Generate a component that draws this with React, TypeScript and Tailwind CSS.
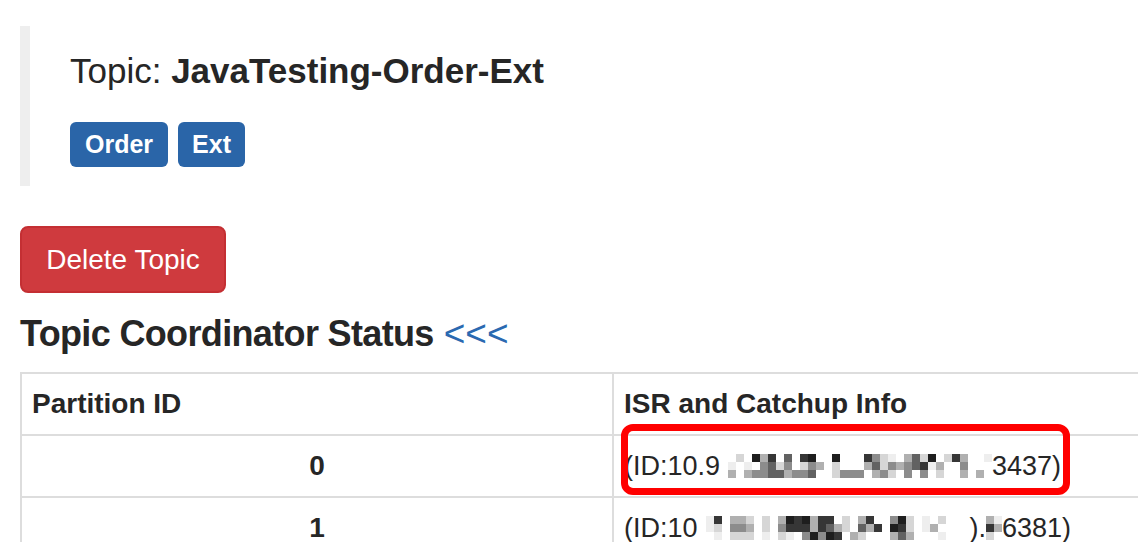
import React from "react";

const SHADES: Record<string, string> = {
  "0": "#ffffff",
  "1": "#eeeeee",
  "2": "#d6d6d6",
  "3": "#b0b0b0",
  "4": "#8c8c8c",
  "5": "#626262",
  "6": "#363636",
  "7": "#1e1e1e",
};

function Mosaic({ rows }: { rows: string[] }) {
  const cell = 8;
  const cols = rows[0].length;
  return (
    <svg
      width={cols * cell}
      height={rows.length * cell}
      viewBox={`0 0 ${cols * cell} ${rows.length * cell}`}
      className="shrink-0"
    >
      {rows.map((r, y) =>
        r.split("").map((c, x) =>
          c === "0" ? null : (
            <rect key={`${x}-${y}`} x={x * cell} y={y * cell} width={cell} height={cell} fill={SHADES[c]} />
          )
        )
      )}
    </svg>
  );
}

const mosaicA = [
  "0020736050670070006421035270263001",
  "0101045240243020003524345613004000",
  "0303445534450024440342040402003030",
];

const mosaicB = [
  "0160332020376736602036004720102000",
  "0120443020466636532053607620130000",
  "0010222010210474760320003530001000",
];

const mosaicC = ["31", "63", "20"];

export default function App() {
  return (
    <div
      className="w-[1138px] h-[542px] overflow-hidden bg-white text-[#262626] pl-[20px] pt-[26px]"
      style={{ fontFamily: '"Liberation Sans", Arial, Helvetica, sans-serif' }}
    >
      {/* Blockquote */}
      <div className="border-l-[10px] border-[#eeeeee] pl-[40px] pt-[20px] pb-[19px] h-[160px]">
        <div className="text-[35px] leading-[50px]">
          Topic: <span className="font-bold">JavaTesting-Order-Ext</span>
        </div>
        <div className="flex gap-[10px] mt-[26px]">
          <span className="h-[45px] flex items-center px-[15px] rounded-[6px] bg-[#2a65a8] text-white font-bold text-[25px]">
            Order
          </span>
          <span className="h-[45px] flex items-center px-[14px] rounded-[6px] bg-[#2a65a8] text-white font-bold text-[25px]">
            Ext
          </span>
        </div>
      </div>

      {/* Delete button */}
      <button className="mt-[40px] h-[67px] w-[206px] rounded-[8px] bg-[#cf3a3e] border-2 border-[#c42f33] text-white text-[28px] flex items-center justify-center">
        Delete Topic
      </button>

      {/* Heading */}
      <h3 className="mt-[21px] text-[36px] leading-[40px] whitespace-nowrap">
        <span className="font-bold tracking-[-0.65px]">Topic Coordinator Status</span>{" "}
        <a className="text-[#2a69b1] font-normal text-[37px]">&lt;&lt;&lt;</a>
      </h3>

      {/* Table */}
      <div className="relative mt-[18px] w-[1240px] border-l-2 border-t-2 border-[#dddddd]">
        <div className="flex border-b-2 border-[#dddddd]">
          <div className="w-[592px] shrink-0 border-r-2 border-[#dddddd] p-[10px] text-[28px] leading-[40px] font-bold">
            Partition ID
          </div>
          <div className="flex-1 p-[10px] text-[28px] leading-[40px] font-bold">ISR and Catchup Info</div>
        </div>
        <div className="flex border-b-2 border-[#dddddd]">
          <div className="w-[592px] shrink-0 border-r-2 border-[#dddddd] p-[10px] text-[28px] leading-[40px] font-bold text-center">
            0
          </div>
          <div className="flex-1 p-[10px] text-[27px] leading-[40px] flex items-center whitespace-nowrap">
            <span>(ID:10.9</span>
            <Mosaic rows={mosaicA} />
            <span>3437)</span>
          </div>
        </div>
        <div className="flex border-b-2 border-[#dddddd]">
          <div className="w-[592px] shrink-0 border-r-2 border-[#dddddd] p-[10px] text-[28px] leading-[40px] font-bold text-center">
            1
          </div>
          <div className="flex-1 p-[10px] text-[27px] leading-[40px] flex items-center whitespace-nowrap">
            <span>(ID:10</span>
            <Mosaic rows={mosaicB} />
            <span>).</span>
            <Mosaic rows={mosaicC} />
            <span>6381)</span>
          </div>
        </div>

        {/* Red annotation box */}
        <div className="absolute left-[599px] top-[50px] w-[449px] h-[71px] border-[7px] border-[#ff0000] rounded-[12px] pointer-events-none" />
      </div>
    </div>
  );
}
